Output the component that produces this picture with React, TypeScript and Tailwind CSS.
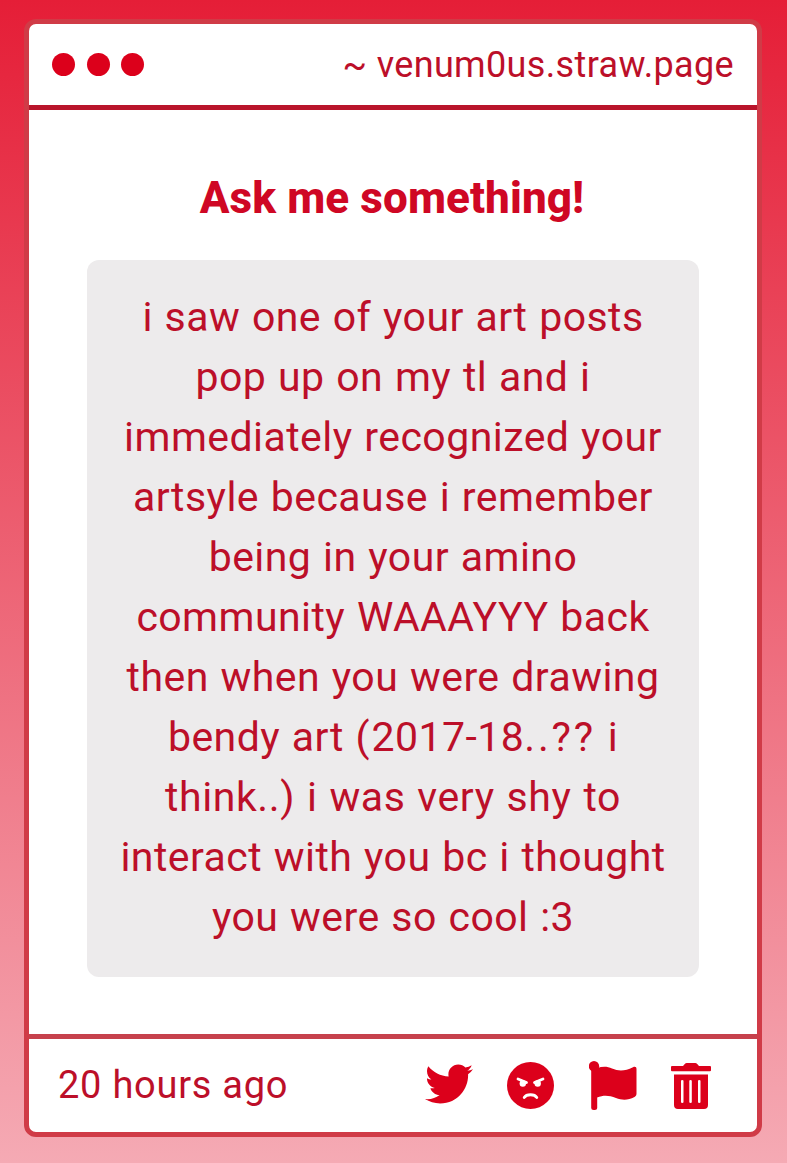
import { FaTwitter } from "react-icons/fa";

function AngryIcon() {
    return (
        <svg className="size-[47px]" viewBox="0 0 47 47" fill="currentColor">
            <circle cx="23.5" cy="23.5" r="23.5" />
            <g fill="white">
                <circle cx="15.8" cy="21.5" r="3.2" />
                <circle cx="30.7" cy="21.5" r="3.2" />
            </g>
            <g fill="none" stroke="white" strokeWidth="2.8" strokeLinecap="round">
                <path d="M11 17L19.5 20.5" />
                <path d="M36 17L27.5 20.5" />
                <path d="M17.2 35.5C19.5 31.8 27.5 31.8 29.8 35.5" />
            </g>
        </svg>
    );
}

function FlagIcon() {
    return (
        <svg className="h-[49px] w-[48px]" viewBox="0 0 48 49" fill="currentColor">
            <circle cx="5" cy="5.2" r="5.2" />
            <rect x="2.2" y="5" width="6" height="44" rx="2.5" />
            <path d="M8 7.2C13 5.4 18 5.2 23 7.4C30 10.4 36 10 44 6.2C46.2 5.2 47.5 6 47.5 8V32.5C47.5 34.2 47 35 45.5 35.900C39 39.5 33 39.3 27 37C20 34.3 15 33.8 8 36.5Z" />
        </svg>
    );
}

function TrashIcon() {
    return (
        <svg className="h-[46px] w-[40px]" viewBox="0 0 40 46" fill="currentColor">
            <path d="M1 3H12L14 .8Q14.7 0 15.7 0H24.3Q25.3 0 26 .8L28 3H39Q40 3 40 4V7.2Q40 8.2 39 8.2H1Q0 8.2 0 7.2V4Q0 3 1 3Z" />
            <path
                fillRule="evenodd"
                d="M3 11.5H37V42Q37 46 33 46H7Q3 46 3 42ZM10 18V39Q10 40 11.25 40Q12.5 40 12.5 39V18Q12.5 17 11.25 17Q10 17 10 18ZM18.3 18V39Q18.3 40 19.55 40Q20.8 40 20.8 39V18Q20.8 17 19.55 17Q18.3 17 18.3 18ZM27 18V39Q27 40 28.25 40Q29.5 40 29.5 39V18Q29.5 17 28.25 17Q27 17 27 18Z"
            />
        </svg>
    );
}

export default function App() {
    return (
        <div className="h-[1163px] bg-linear-to-b/srgb from-[#e51e37] to-[#f5aab4] pt-[19px] pl-6 font-['Roboto',sans-serif] text-[#bc0f29]">
            <div className="flex h-[1118px] w-[738px] flex-col overflow-hidden rounded-xl border-[5px] border-[#d03b47] bg-white">
                <div className="flex h-[86px] shrink-0 items-center justify-between border-b-[5px] border-[#b9142b] pr-[23px] pl-[23px]">
                    <div className="flex gap-[11.5px] text-[#dc001b]">
                        <span className="size-[23px] rounded-full bg-current" />
                        <span className="size-[23px] rounded-full bg-current" />
                        <span className="size-[23px] rounded-full bg-current" />
                    </div>
                    <span className="text-[36px] leading-[54px] tracking-[0.35px]">~ venum0us.straw.page</span>
                </div>

                <div className="flex flex-1 flex-col items-center">
                    <h1 className="mt-[58px] mr-0.5 text-[44px] leading-[60px] font-extrabold tracking-[0.1px] text-[#cf0724]">Ask me something!</h1>
                    <div className="mt-8 h-[717px] w-[612px] rounded-xl bg-[#edebec] pt-[27px] text-center text-[41px] leading-[60px] tracking-[0.45px] whitespace-nowrap [word-spacing:1.1px]">
                        <p>i saw one of your art posts</p>
                        <p>pop up on my tl and i</p>
                        <p>immediately recognized your</p>
                        <p>artsyle because i remember</p>
                        <p>being in your amino</p>
                        <p>community WAAAYYY back</p>
                        <p>then when you were drawing</p>
                        <p>
                            bendy art <span className="tracking-[2px]">(</span>2017-18<span className="tracking-[2.8px]">..??</span> i
                        </p>
                        <p className="tracking-[0.6px]">think..) i was very shy to</p>
                        <p>interact with you bc i thought</p>
                        <p>you were so cool :3</p>
                    </div>
                </div>

                <div className="flex h-[98px] shrink-0 items-center justify-between border-t-[5px] border-[#c6414c] pr-[46px] pl-[29px]">
                    <span className="-mt-0.5 text-[38px] leading-[56px] tracking-[0.75px]">20 hours ago</span>
                    <div className="flex items-center gap-[34px] text-[#dc001b]">
                        <FaTwitter className="-mt-[3px] size-[48px]" />
                        <AngryIcon />
                        <div className="pl-px">
                            <FlagIcon />
                        </div>
                        <TrashIcon />
                    </div>
                </div>
            </div>
        </div>
    );
}
